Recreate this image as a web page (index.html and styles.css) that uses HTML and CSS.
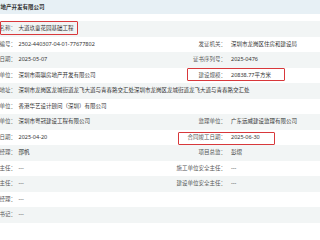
FILE: index.html
```html
<!DOCTYPE html>
<html lang="zh-CN">
<head>
<meta charset="utf-8">
<link rel="stylesheet" href="styles.css">
</head>
<body>
<div class="page">
  <div class="sheet">
    <div class="head"><span class="head-title">深圳市雨骐房地产开发有限公司</span></div>
    <div class="grid">
      <div class="row odd"><span class="lab">项目名称：</span><span class="val wide">大道玖童花园基础工程</span></div>
      <div class="row"><span class="lab">项目编号：</span><span class="val">2502-440307-04-01-77677802</span><span class="lab2">发证机关：</span><span class="val2">深圳市龙岗区住房和建设局</span></div>
      <div class="row odd"><span class="lab">发证日期：</span><span class="val">2025-05-07</span><span class="lab2">证书序列号：</span><span class="val2">2025-0476</span></div>
      <div class="row"><span class="lab">建设单位：</span><span class="val">深圳市雨骐房地产开发有限公司</span><span class="lab2">建设规模：</span><span class="val2">20838.77平方米</span></div>
      <div class="row odd"><span class="lab">建设地址：</span><span class="val wide">深圳市龙岗区龙城街道龙飞大道与青春路交汇处深圳市龙岗区龙城街道龙飞大道与青春路交汇处</span></div>
      <div class="row"><span class="lab">设计单位：</span><span class="val wide">香港华艺设计顾问（深圳）有限公司</span></div>
      <div class="row odd"><span class="lab">施工单位：</span><span class="val">深圳市粤冠建设工程有限公司</span><span class="lab2">监理单位：</span><span class="val2">广东远威建设监理有限公司</span></div>
      <div class="row"><span class="lab">合同开工日期：</span><span class="val">2025-04-20</span><span class="lab2">合同竣工日期：</span><span class="val2">2025-06-30</span></div>
      <div class="row odd"><span class="lab">项目经理：</span><span class="val">邵帆</span><span class="lab2">项目总监：</span><span class="val2">彭熠</span></div>
      <div class="row"><span class="lab">项目安全主任：</span><span class="val">---</span><span class="lab2">施工单位安全主任：</span><span class="val2">---</span></div>
      <div class="row odd"><span class="lab">监理安全主任：</span><span class="val">---</span><span class="lab2">建设单位安全主任：</span><span class="val2">---</span></div>
      <div class="row"><span class="lab">安全经理：</span><span class="val wide">---</span></div>
      <div class="row odd"><span class="lab">安全书记：</span><span class="val wide">---</span></div>
    </div>
  </div>
  <div class="mark mark-a"></div>
  <div class="mark mark-b"></div>
  <div class="mark mark-c"></div>
</div>
</body>
</html>
```
FILE: styles.css
```css
html, body {
  margin: 0;
  padding: 0;
  background: #ffffff;
}
body {
  font-family: "Noto Sans", "Noto Sans CJK SC", sans-serif;
  font-size: 5.5px;
  color: #3a3a3a;
  width: 320px;
  height: 240px;
  overflow: hidden;
}
.page {
  position: relative;
  width: 320px;
  height: 240px;
  overflow: hidden;
}
.sheet {
  margin-left: -44px;
  width: 380px;
}
.head {
  height: 14px;
  line-height: 14px;
  background: #e7f0f5;
  padding-left: 11.5px;
  margin-bottom: 7.25px;
}
.head-title {
  font-weight: bold;
  color: #333;
}
.grid {
  display: flex;
  flex-direction: column;
}
.row {
  display: grid;
  grid-template-columns: 60px 154px 56px 1fr;
  height: 15.5px;
  line-height: 15.5px;
  white-space: nowrap;
}
.row.odd {
  background: #f2f5f5;
}
.lab, .lab2 {
  display: flex;
  justify-content: flex-end;
  color: #555;
}
.val {
  padding-left: 2.5px;
  color: #333;
}
.val.wide {
  grid-column: 2 / 5;
}
.val2 {
  padding-left: 5px;
  color: #333;
}
.mark {
  position: absolute;
  border: 1.5px solid #d8383b;
  border-radius: 1px;
  box-sizing: border-box;
}
.mark-a {
  left: 0;
  top: 21px;
  width: 78px;
  height: 13.5px;
}
.mark-b {
  left: 187px;
  top: 68px;
  width: 98px;
  height: 12.5px;
}
.mark-c {
  left: 178px;
  top: 132px;
  width: 97px;
  height: 12.5px;
}
```
